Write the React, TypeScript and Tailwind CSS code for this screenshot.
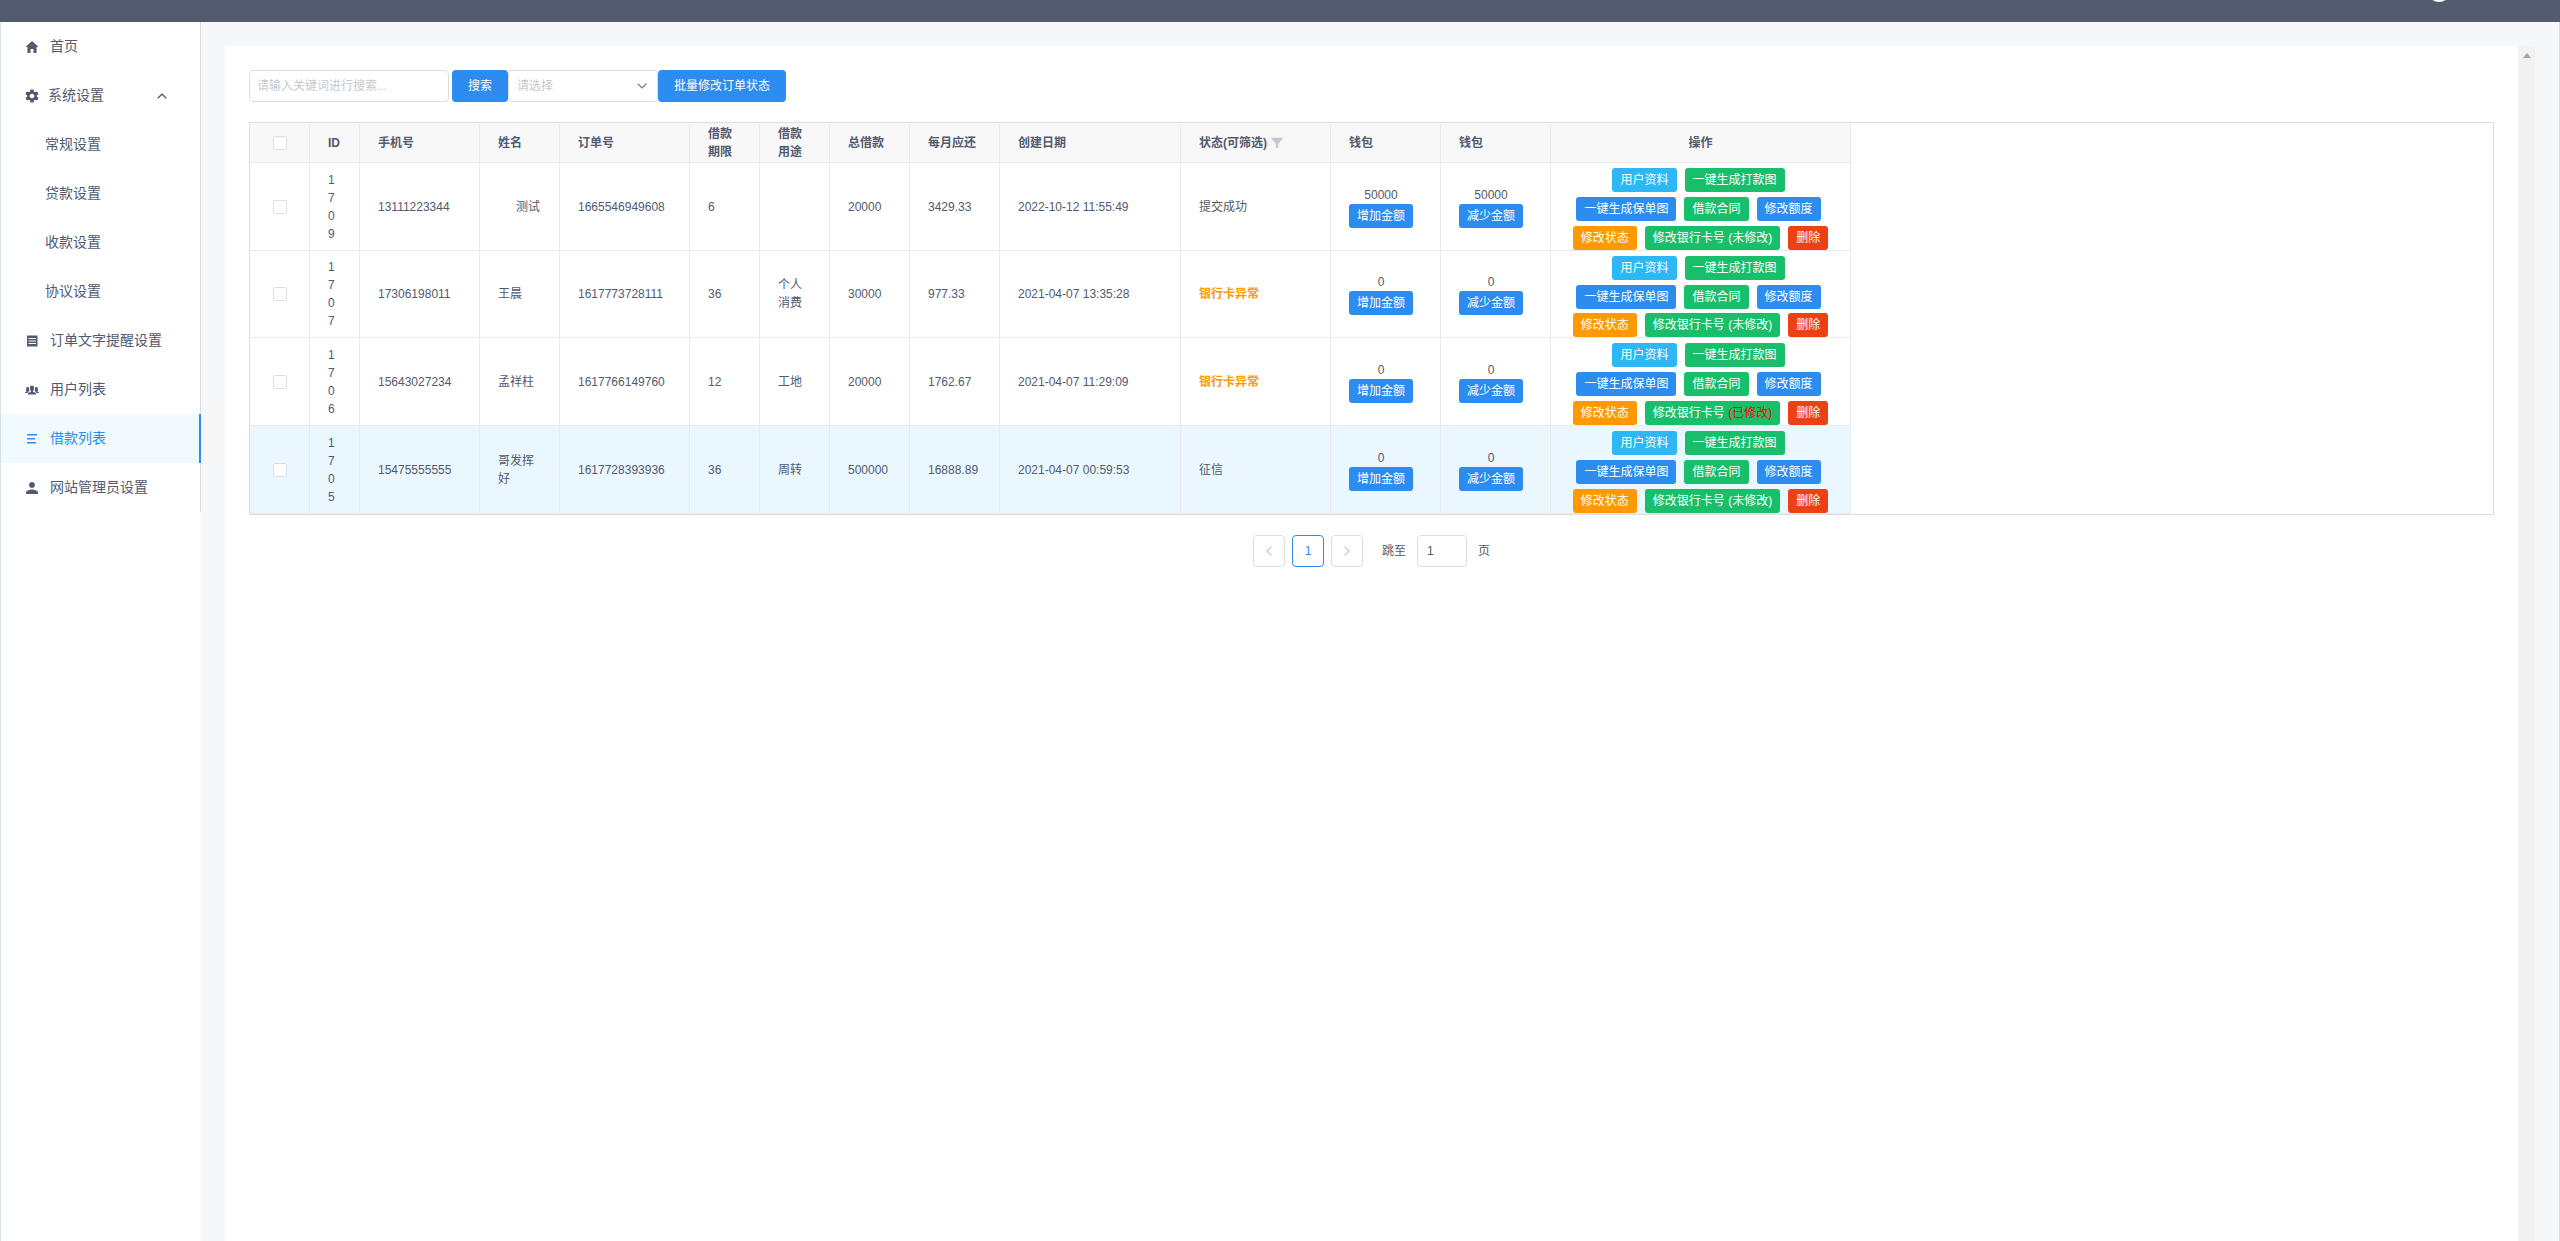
import React from "react";
import {
  IoIosArrowBack,
  IoIosArrowDown,
  IoIosArrowForward,
  IoIosArrowUp,
  IoIosFunnel,
  IoIosPeople,
  IoMdHome,
  IoMdPerson,
  IoMdSettings,
} from "react-icons/io";

const ListIcon = () => (
  <svg width="16" height="16" viewBox="0 0 16 16" fill="currentColor">
    <rect x="3" y="3" width="10" height="1.5" />
    <rect x="3" y="7" width="8" height="1.5" />
    <rect x="3" y="11" width="9" height="1.5" />
  </svg>
);

const PaperIcon = () => (
  <svg width="16" height="16" viewBox="0 0 16 16" fill="currentColor">
    <path d="M3 2.5h10.5v11H3zM4.5 5v1h7.5V5zm0 2.5v1h7.5v-1zm0 2.5v1h7.5v-1z" fillRule="evenodd" />
  </svg>
);

const columns = [
  { label: "", w: "w-[60px]" },
  { label: "ID", w: "w-[50px]" },
  { label: "手机号", w: "w-[120px]" },
  { label: "姓名", w: "w-[80px]" },
  { label: "订单号", w: "w-[130px]" },
  { label: "借款期限", w: "w-[70px]" },
  { label: "借款用途", w: "w-[70px]" },
  { label: "总借款", w: "w-[80px]" },
  { label: "每月应还", w: "w-[90px]" },
  { label: "创建日期", w: "w-[181px]" },
  { label: "状态(可筛选)", w: "w-[150px]" },
  { label: "钱包", w: "w-[110px]" },
  { label: "钱包", w: "w-[110px]" },
  { label: "操作", w: "w-[300px]" },
];

const rows = [
  {
    id: "1709",
    phone: "13111223344",
    name: "测试",
    order: "1665546949608",
    term: "6",
    use: "",
    total: "20000",
    monthly: "3429.33",
    date: "2022-10-12 11:55:49",
    status: "提交成功",
    wallet: "50000",
    changed: false,
  },
  {
    id: "1707",
    phone: "17306198011",
    name: "王晨",
    order: "1617773728111",
    term: "36",
    use: "个人消费",
    total: "30000",
    monthly: "977.33",
    date: "2021-04-07 13:35:28",
    status: "银行卡异常",
    wallet: "0",
    changed: false,
  },
  {
    id: "1706",
    phone: "15643027234",
    name: "孟祥柱",
    order: "1617766149760",
    term: "12",
    use: "工地",
    total: "20000",
    monthly: "1762.67",
    date: "2021-04-07 11:29:09",
    status: "银行卡异常",
    wallet: "0",
    changed: true,
  },
  {
    id: "1705",
    phone: "15475555555",
    name: "哥发挥好",
    order: "1617728393936",
    term: "36",
    use: "周转",
    total: "500000",
    monthly: "16888.89",
    date: "2021-04-07 00:59:53",
    status: "征信",
    wallet: "0",
    changed: false,
  },
];

const MenuItem = ({ icon, label, active = false }: { icon: React.ReactNode; label: string; active?: boolean }) => (
  <div
    className={`flex h-[49px] items-center pl-[23px] text-[14px] ${
      active ? "bg-[#f0faff] border-r-2 border-[#2d8cf0] text-[#2d8cf0] -mr-px" : ""
    }`}
  >
    <span className="flex w-[16px] justify-center text-[16px]">{icon}</span>
    <span className="ml-[10px]">{label}</span>
  </div>
);

const SubItem = ({ label }: { label: string }) => (
  <div className="flex h-[49px] items-center pl-[44px] text-[14px]">{label}</div>
);

const Btn = ({ color, className = "", children }: { color: string; className?: string; children: React.ReactNode }) => (
  <span className={`inline-flex h-[24px] shrink-0 items-center justify-center whitespace-pre rounded-[3px] px-[8px] text-[12px] text-white ${color} ${className}`}>
    {children}
  </span>
);

const Checkbox = () => (
  <span className="mx-auto block h-[14px] w-[14px] rounded-[2px] border border-[#dcdee2] bg-white" />
);

const PageBox = ({ active = false, children }: { active?: boolean; children: React.ReactNode }) => (
  <div
    className={`flex h-[32px] w-[32px] items-center justify-center rounded-[4px] border bg-white ${
      active ? "border-[#2d8cf0] text-[#2d8cf0]" : "border-[#dcdee2] text-[#c5c8ce]"
    }`}
  >
    {children}
  </div>
);

const td = "border-b border-r border-[#e8eaec] px-[18px] align-middle";

export default function App() {
  return (
    <div className="flex h-screen flex-col overflow-hidden font-['Liberation_Sans','Noto_Sans_CJK_SC',sans-serif] text-[12px] leading-[18px] text-[#515a6e]">
      {/* top bar */}
      <div className="flex h-[22px] shrink-0 items-start justify-end overflow-hidden bg-[#515a6e] pr-[109px]">
        <div className="-mt-[22px] h-[24px] w-[24px] shrink-0 rounded-full bg-white" />
      </div>

      <div className="flex min-h-0 flex-1 border-x border-[#d7e1ec]">
        {/* sidebar */}
        <div className="w-[200px] shrink-0 bg-white">
          <div className="border-r border-[#dcdee2] leading-[21px]">
            <MenuItem icon={<IoMdHome />} label="首页" />
            <div className="flex h-[49px] items-center pl-[23px] pr-[31px] text-[14px]">
              <span className="flex w-[16px] justify-center text-[16px]">
                <IoMdSettings />
              </span>
              <span className="ml-[8px] flex-1">系统设置</span>
              <IoIosArrowUp className="text-[14px]" />
            </div>
            <SubItem label="常规设置" />
            <SubItem label="贷款设置" />
            <SubItem label="收款设置" />
            <SubItem label="协议设置" />
            <MenuItem icon={<PaperIcon />} label="订单文字提醒设置" />
            <MenuItem icon={<IoIosPeople />} label="用户列表" />
            <MenuItem icon={<ListIcon />} label="借款列表" active />
            <MenuItem icon={<IoMdPerson />} label="网站管理员设置" />
          </div>
        </div>

        {/* content */}
        <div className="flex min-w-0 flex-1 bg-[#f5f7f9] pl-[24px] pr-[24px] pt-[24px]">
          <div className="min-w-0 flex-1 bg-white p-[24px]">
            {/* toolbar */}
            <div className="flex h-[32px] items-stretch">
              <div className="flex w-[200px] items-center rounded-[4px] border border-[#dcdee2] pl-[7px] text-[#c5c8ce]">
                请输入关键词进行搜索...
              </div>
              <div className="ml-[3px] flex w-[56px] items-center justify-center rounded-[4px] bg-[#2d8cf0] text-white">
                搜索
              </div>
              <div className="flex w-[150px] items-center justify-between rounded-[4px] border border-[#dcdee2] pl-[8px] pr-[8px] text-[#c5c8ce]">
                请选择
                <IoIosArrowDown className="text-[14px] text-[#808695]" />
              </div>
              <div className="flex w-[128px] items-center justify-center rounded-[4px] bg-[#2d8cf0] text-white">
                批量修改订单状态
              </div>
            </div>

            {/* table */}
            <div className="mt-[20px] border border-[#dcdee2]">
              <table className="w-[1601px] table-fixed border-separate border-spacing-0">
                <colgroup>
                  {columns.map((c, i) => (
                    <col key={i} className={c.w} />
                  ))}
                </colgroup>
                <thead>
                  <tr>
                    {columns.map((c, i) => (
                      <th
                        key={i}
                        className={`h-[40px] border-b border-r border-[#e8eaec] bg-[#f8f8f9] px-[18px] font-bold ${
                          i === 13 ? "text-center" : "text-left"
                        }`}
                      >
                        {i === 0 ? (
                          <Checkbox />
                        ) : i === 10 ? (
                          <span className="flex items-center whitespace-nowrap">
                            {c.label}
                            <IoIosFunnel className="ml-[3px] text-[14px] text-[#c5c8ce]" />
                          </span>
                        ) : (
                          c.label
                        )}
                      </th>
                    ))}
                  </tr>
                </thead>
                <tbody>
                  {rows.map((r, i) => (
                    <tr key={r.id} className={`${i === 1 ? "h-[87px]" : "h-[88px]"} ${i === 3 ? "bg-[#ebf7ff]" : ""}`}>
                      <td className={td}>
                        <Checkbox />
                      </td>
                      <td className={`${td} break-all`}>{r.id}</td>
                      <td className={td}>{r.phone}</td>
                      <td className={td}>
                        <span className={`block ${i === 0 ? "pl-[18px]" : ""}`}>{r.name}</span>
                      </td>
                      <td className={td}>{r.order}</td>
                      <td className={td}>{r.term}</td>
                      <td className={td}>{r.use}</td>
                      <td className={td}>{r.total}</td>
                      <td className={td}>{r.monthly}</td>
                      <td className={td}>{r.date}</td>
                      <td className={td}>
                        <span className={r.status === "银行卡异常" ? "font-bold text-[#ff9900]" : ""}>{r.status}</span>
                      </td>
                      <td className={td}>
                        <div className="w-[64px] text-center">
                          {r.wallet}
                          <Btn color="bg-[#2d8cf0]" className="w-[64px] px-0">增加金额</Btn>
                        </div>
                      </td>
                      <td className={td}>
                        <div className="w-[64px] text-center">
                          {r.wallet}
                          <Btn color="bg-[#2d8cf0]" className="w-[64px] px-0">减少金额</Btn>
                        </div>
                      </td>
                      <td className="border-b border-r border-[#e8eaec] pt-[5px] align-top">
                        <div className={`flex flex-col ${i === 1 ? "gap-[4.5px]" : "gap-[5px]"}`}>
                          <div className="flex justify-center gap-[8px] pr-[4px]">
                            <Btn color="bg-[#2db7f5]">用户资料</Btn>
                            <Btn color="bg-[#19be6b]">一键生成打款图</Btn>
                          </div>
                          <div className="flex justify-center gap-[8px] pr-[4px]">
                            <Btn color="bg-[#2d8cf0]">一键生成保单图</Btn>
                            <Btn color="bg-[#19be6b]">借款合同</Btn>
                            <Btn color="bg-[#2d8cf0]">修改额度</Btn>
                          </div>
                          <div className="flex justify-center gap-[8px]">
                            <Btn color="bg-[#ff9900]">修改状态</Btn>
                            <Btn color="bg-[#19be6b]">
                              修改银行卡号{" "}
                              {r.changed ? <span className="text-[#ff0000]">(已修改)</span> : "(未修改)"}
                            </Btn>
                            <Btn color="bg-[#ed4014]">删除</Btn>
                          </div>
                        </div>
                      </td>
                    </tr>
                  ))}
                </tbody>
              </table>
            </div>

            {/* pagination */}
            <div className="mt-[20px] flex items-center justify-center">
              <PageBox>
                <IoIosArrowBack className="text-[14px]" />
              </PageBox>
              <div className="mx-[7px]">
                <PageBox active>1</PageBox>
              </div>
              <PageBox>
                <IoIosArrowForward className="text-[14px]" />
              </PageBox>
              <span className="ml-[19px]">跳至</span>
              <div className="mx-[11px] flex h-[32px] w-[50px] items-center rounded-[4px] border border-[#dcdee2] pl-[9px]">
                1
              </div>
              <span>页</span>
            </div>
          </div>

          {/* scrollbar */}
          <div className="flex w-[17px] shrink-0 justify-center bg-[#f1f1f1] pt-[7px]">
            <svg width="8" height="5" viewBox="0 0 8 5" fill="#a3a3a3">
              <polygon points="4,0 8,5 0,5" />
            </svg>
          </div>
        </div>
      </div>
    </div>
  );
}
